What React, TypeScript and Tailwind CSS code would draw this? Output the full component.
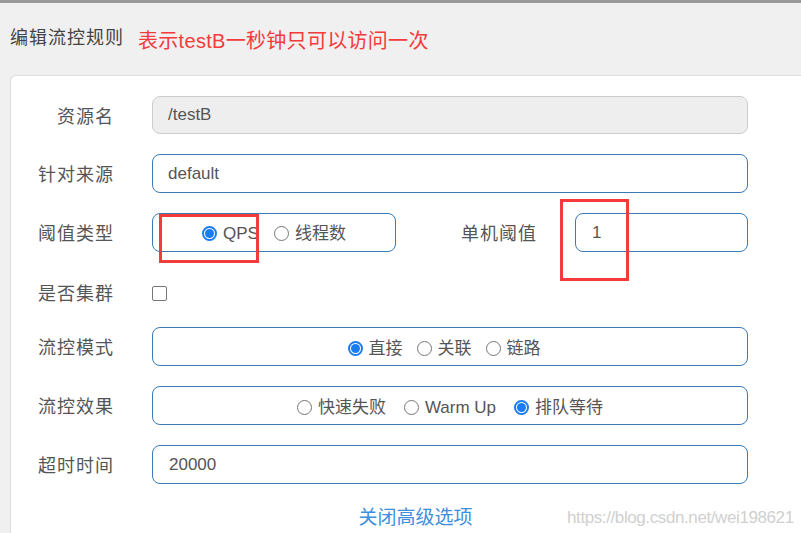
import React from 'react';

const font = { fontFamily: '"Liberation Sans", "Noto Sans CJK SC", sans-serif' };

function Radio({ checked, label }: { checked?: boolean; label: string }) {
  return (
    <span className="inline-flex items-center gap-[6px]">
      {checked ? (
        <span className="w-[15px] h-[15px] rounded-full border-2 border-[#1a7cf0] flex items-center justify-center bg-white">
          <span className="w-[9px] h-[9px] rounded-full bg-[#1a7cf0]" />
        </span>
      ) : (
        <span className="w-[15px] h-[15px] rounded-full border border-[#767676] bg-white" />
      )}
      <span className="text-[17px] text-[#555]">{label}</span>
    </span>
  );
}

function Label({ children, w = 'w-[103px]' }: { children: React.ReactNode; w?: string }) {
  return <div className={`${w} pt-[4px] text-right text-[18px] tracking-[1px] text-[#555] shrink-0`}>{children}</div>;
}

export default function App() {
  return (
    <div className="relative w-[801px] h-[533px] bg-[#f0f0f0] flex flex-col overflow-hidden" style={font}>
      <div className="h-[3px] bg-[#9a9a9a]" />

      {/* header */}
      <div className="h-[72px] flex items-center pl-[10px] pb-[2px]">
        <span className="text-[18px] tracking-[1px] text-[#444]">编辑流控规则</span>
        <span className="ml-[14px] mt-[5px] text-[20px] text-[#f43a3a] tracking-[0.3px]">表示testB一秒钟只可以访问一次</span>
      </div>

      {/* card */}
      <div className="flex-1 ml-[10px] bg-white border-l border-t border-[#dcdcdc] rounded-tl-[6px] pt-[20px] pr-[53px]">
        <div className="flex items-center h-[38px]">
          <Label>资源名</Label>
          <div className="ml-[38px] flex-1 h-[38px] rounded-[8px] border border-[#ccc] bg-[#eee] flex items-center pl-[15px] text-[17px] text-[#555]">
            /testB
          </div>
        </div>

        <div className="flex items-center h-[39px] mt-[20px]">
          <Label>针对来源</Label>
          <div className="ml-[38px] flex-1 h-[39px] rounded-[8px] border border-[#3a7ab8] flex items-center pl-[15px] text-[17px] text-[#555]">
            default
          </div>
        </div>

        <div className="flex items-center h-[39px] mt-[20px]">
          <Label>阈值类型</Label>
          <div className="ml-[38px] w-[244px] h-[39px] rounded-[8px] border border-[#3a7ab8] flex items-center justify-center gap-[15px] pt-[2px]">
            <Radio checked label="QPS" />
            <Radio label="线程数" />
          </div>
          <Label w="w-[141px]">单机阈值</Label>
          <div className="ml-[38px] flex-1 h-[39px] rounded-[8px] border border-[#3a7ab8] flex items-center pl-[16px] text-[17px] text-[#555]">
            1
          </div>
        </div>

        <div className="flex items-center h-[38px] mt-[21px]">
          <Label>是否集群</Label>
          <div className="ml-[38px] w-[15px] h-[15px] rounded-[2px] border border-[#767676] mt-[2px]" />
        </div>

        <div className="flex items-center h-[39px] mt-[16px]">
          <Label>流控模式</Label>
          <div className="ml-[38px] flex-1 h-[39px] rounded-[8px] border border-[#3a7ab8] flex items-center justify-center gap-[14px] pr-[12px] pt-[4px]">
            <Radio checked label="直接" />
            <Radio label="关联" />
            <Radio label="链路" />
          </div>
        </div>

        <div className="flex items-center h-[39px] mt-[20px]">
          <Label>流控效果</Label>
          <div className="ml-[38px] flex-1 h-[39px] rounded-[8px] border border-[#3a7ab8] flex items-center justify-center gap-[18px] pt-[4px]">
            <Radio label="快速失败" />
            <Radio label="Warm Up" />
            <Radio checked label="排队等待" />
          </div>
        </div>

        <div className="flex items-center h-[39px] mt-[20px]">
          <Label>超时时间</Label>
          <div className="ml-[38px] flex-1 h-[39px] rounded-[8px] border border-[#3a7ab8] flex items-center pl-[16px] text-[17px] text-[#555]">
            20000
          </div>
        </div>

        <div className="mt-[20px] text-center pl-[72px] text-[19px] text-[#3d8fdd]">关闭高级选项</div>
      </div>

      {/* watermark */}
      <div className="absolute left-[567px] top-[505px] text-[17px] text-[#d0d0d0] tracking-[-0.4px]">
        https://blog.csdn.net/wei198621
      </div>

      {/* annotation boxes */}
      <div className="absolute left-[159px] top-[214px] w-[100px] h-[49px] border-[3px] border-[#f43a3a]" />
      <div className="absolute left-[560px] top-[199px] w-[69px] h-[82px] border-[3px] border-[#f43a3a]" />
    </div>
  );
}
